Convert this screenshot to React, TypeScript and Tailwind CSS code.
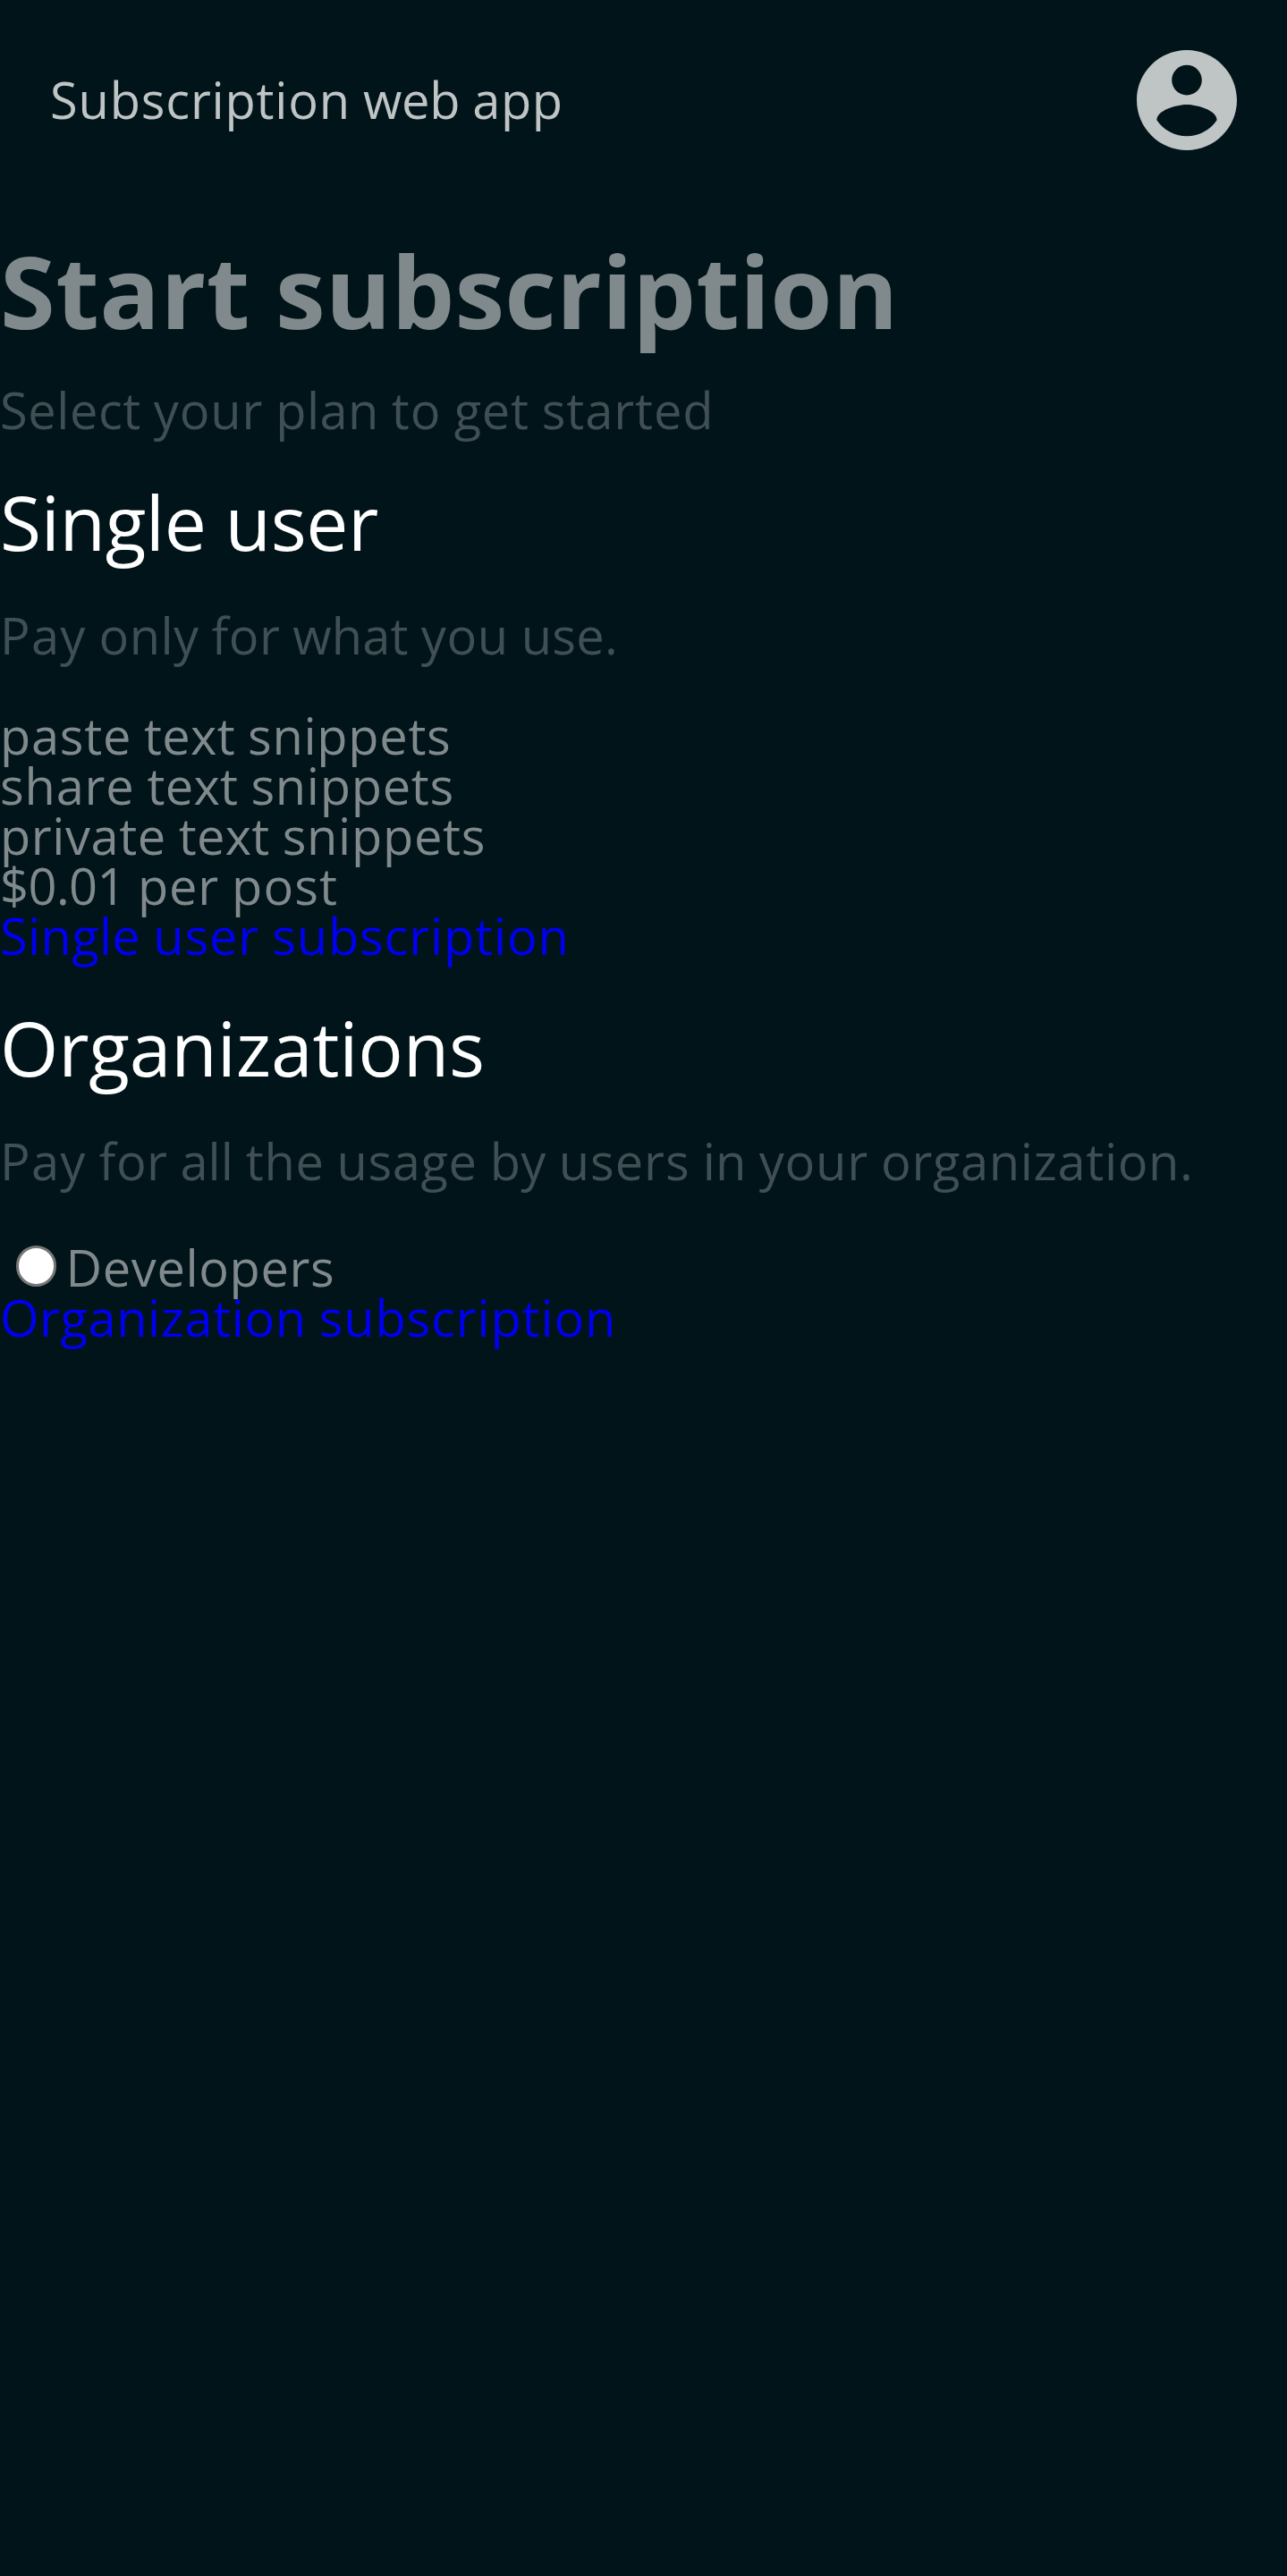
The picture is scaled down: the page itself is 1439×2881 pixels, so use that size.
import React from "react";

const features = ["paste text snippets", "share text snippets", "private text snippets", "$0.01 per post"];

// Open Sans advance widths, in 1/2048 em.
const advances: Record<string, number> = {
  a: 1139, b: 1255, c: 975, d: 1255, e: 1149, f: 694, g: 1122, h: 1257, i: 518, l: 518, n: 1257, o: 1237,
  p: 1255, r: 836, s: 977, t: 723, u: 1257, v: 1020, w: 1593, x: 1073, y: 1024, z: 958,
  O: 1595, P: 1233, S: 1124, D: 1493, ".": 545, $: 1169, "0": 1169, "1": 1169,
};

const SCALE = 3.5;

const kerningLoss: Record<string, number> = { Pay: 0.6 };

// Extra tracking that snaps a word's letters to whole units of the base font size.
function tracking(word: string, size: number) {
  const extra = [...word].reduce((sum, char) => {
    const advance = ((advances[char] ?? 0) * size) / 2048;
    const snapped = char === "z" ? Math.ceil(advance) : Math.round(advance);
    return sum + snapped - advance;
  }, kerningLoss[word] ?? 0);
  return (extra * SCALE) / word.length;
}

function Snapped({ text, size = 16 }: { text: string; size?: number }) {
  return (
    <span>
      {text.split(" ").map((word, index) => (
        <React.Fragment key={index}>
          {index > 0 && " "}
          <span style={{ letterSpacing: `${tracking(word, size).toFixed(3)}px` }}>{word}</span>
        </React.Fragment>
      ))}
    </span>
  );
}

export default function App() {
  return (
    <div className="h-[2881px] w-full overflow-hidden bg-[#001419] font-['Open_Sans',sans-serif] text-[56px] leading-[56px] text-[#80898c] [word-spacing:-0.56px]">
      <header className="flex h-56 items-center justify-between px-14 text-[#bfc4c5]">
        <span className="pb-0.5"><Snapped text="Subscription web app" /></span>
        <svg viewBox="2 2 20 20" className="size-28" fill="currentColor">
          <path d="M12 2C6.48 2 2 6.48 2 12s4.48 10 10 10 10-4.48 10-10S17.52 2 12 2zm0 3c1.66 0 3 1.34 3 3s-1.34 3-3 3-3-1.34-3-3 1.34-3 3-3zm0 14.2c-2.5 0-4.71-1.28-6-3.22.03-1.99 4-3.08 6-3.08 1.99 0 5.97 1.09 6 3.08-1.29 1.94-3.5 3.22-6 3.22z" />
        </svg>
      </header>
      <main>
        <h1 className="mt-[45px] text-[112px] leading-[112px] font-bold [word-spacing:-1.1px]">
          <span className="tracking-[0.5px]">Start</span> <span className="tracking-[0.12px]">subscription</span>
        </h1>
        <p className="mt-[49px] text-[#404f53]"><Snapped text="Select your plan to get started" /></p>
        <h2 className="mt-14 text-[84px] leading-[84px] text-white [word-spacing:-0.8px]"><Snapped text="Single user" size={24} /></h2>
        <p className="mt-14 text-[#404f53]"><Snapped text="Pay only for what you use." /></p>
        <ul className="mt-14">
          {features.map((feature) => (
            <li key={feature}><Snapped text={feature} /></li>
          ))}
        </ul>
        <a href="#single" className="block text-[#0000ee]"><Snapped text="Single user subscription" /></a>
        <h2 className="mt-14 text-[84px] leading-[84px] text-white"><Snapped text="Organizations" size={24} /></h2>
        <p className="mt-14 text-[#404f53]"><Snapped text="Pay for all the usage by users in your organization." /></p>
        <label className="mt-[63px] flex h-14 items-start">
          <input type="radio" className="mt-1 mr-[10.5px] ml-[17.5px] size-[45.5px] appearance-none rounded-full border-[3px] border-[#767676] bg-white" />
          <Snapped text="Developers" />
        </label>
        <a href="#organization" className="block text-[#0000ee]"><Snapped text="Organization subscription" /></a>
      </main>
    </div>
  );
}
